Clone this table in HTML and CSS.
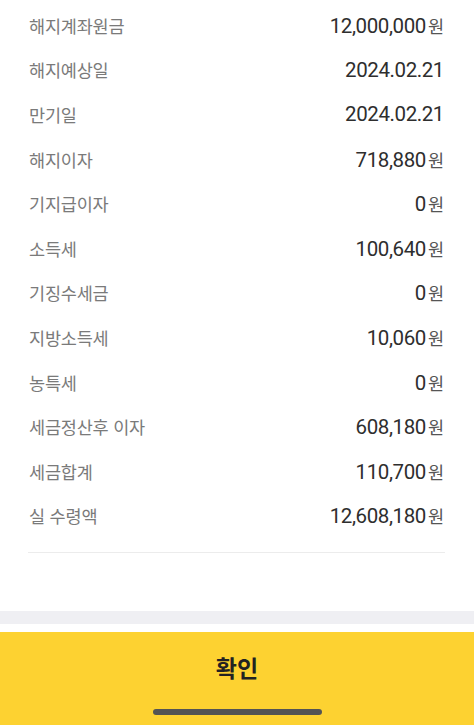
FILE: index.html
```html
<!DOCTYPE html>
<html lang="ko">
<head>
<meta charset="utf-8">
<link rel="stylesheet" href="styles.css">
</head>
<body>
<div class="screen">
  <div class="list">
    <div class="row"><span class="label">해지계좌원금</span><span class="value"><span class="num">12,000,000</span><span class="unit">원</span></span></div>
    <div class="row"><span class="label">해지예상일</span><span class="value"><span class="num">2024.02.21</span></span></div>
    <div class="row"><span class="label">만기일</span><span class="value"><span class="num">2024.02.21</span></span></div>
    <div class="row"><span class="label">해지이자</span><span class="value"><span class="num">718,880</span><span class="unit">원</span></span></div>
    <div class="row"><span class="label">기지급이자</span><span class="value"><span class="num">0</span><span class="unit">원</span></span></div>
    <div class="row"><span class="label">소득세</span><span class="value"><span class="num">100,640</span><span class="unit">원</span></span></div>
    <div class="row"><span class="label">기징수세금</span><span class="value"><span class="num">0</span><span class="unit">원</span></span></div>
    <div class="row"><span class="label">지방소득세</span><span class="value"><span class="num">10,060</span><span class="unit">원</span></span></div>
    <div class="row"><span class="label">농특세</span><span class="value"><span class="num">0</span><span class="unit">원</span></span></div>
    <div class="row"><span class="label">세금정산후 이자</span><span class="value"><span class="num">608,180</span><span class="unit">원</span></span></div>
    <div class="row"><span class="label">세금합계</span><span class="value"><span class="num">110,700</span><span class="unit">원</span></span></div>
    <div class="row"><span class="label">실 수령액</span><span class="value"><span class="num">12,608,180</span><span class="unit">원</span></span></div>
  </div>
  <div class="divider"></div>
  <div class="spacer"></div>
  <div class="band"></div>
  <div class="gap"></div>
  <div class="confirm">
    <span class="confirm-text">확인</span>
    <span class="home-bar"></span>
  </div>
</div>
</body>
</html>
```
FILE: styles.css
```css
* { box-sizing: border-box; }
html, body { margin: 0; padding: 0; background: #fff; }
body { font-family: Roboto, "Noto Sans CJK KR", sans-serif; }
.screen { width: 474px; height: 725px; display: flex; flex-direction: column; overflow: hidden; }
.list { padding: 3px 30px 0 29px; }
.row { height: 44.6px; display: flex; align-items: center; justify-content: space-between; }
.label { font-family: "Noto Sans CJK KR", sans-serif; font-size: 17.5px; color: #7a7a7a; letter-spacing: -0.2px; }
.value { display: flex; align-items: baseline; color: #2e2e2e; }
.num { font-family: Roboto, sans-serif; font-size: 20.5px; font-weight: 400; letter-spacing: -0.4px; }
.unit { font-family: "Noto Sans CJK KR", sans-serif; font-size: 17.5px; margin-left: 2px; color: #555; }
.divider { margin: 14px 29px 0 28px; height: 1px; background: #ececec; }
.spacer { height: 58px; }
.band { height: 13px; background: #efeff3; }
.gap { height: 8px; }
.confirm { flex: 1; background: #fdd231; display: flex; flex-direction: column; align-items: center; }
.confirm-text { font-family: "Noto Sans CJK KR", sans-serif; font-weight: 700; font-size: 23px; color: #222; margin-top: 19px; line-height: 32px; }
.home-bar { margin-top: 26px; width: 169px; height: 6px; border-radius: 3px; background: #545454; }
```
